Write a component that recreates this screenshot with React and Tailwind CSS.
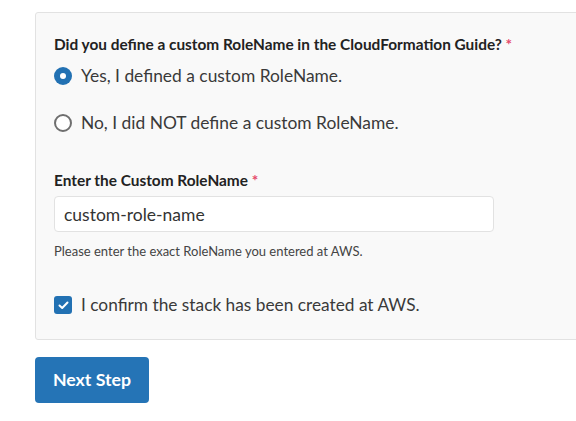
import React, { useState } from 'react';

const Radio = ({ checked, label, onClick }) => (
    <label onClick={onClick} className="flex items-center h-[28px] cursor-pointer">
        <span
            className={
                checked
                    ? 'w-[18px] h-[18px] rounded-full bg-[#2271b3] flex items-center justify-center'
                    : 'w-[18px] h-[18px] rounded-full border-2 border-[#6f6f6f] bg-white'
            }
        >
            {checked && <span className="w-[6px] h-[6px] rounded-full bg-white" />}
        </span>
        <span className="ml-[9px] text-[17.4px] leading-[28px] text-[#3a3a3a]">{label}</span>
    </label>
);

export default function App() {
    const [custom, setCustom] = useState(true);
    const [confirmed, setConfirmed] = useState(true);

    return (
        <div className="w-[576px] h-[421px] bg-white overflow-hidden pt-[12px] pl-[35px]" style={{ fontFamily: 'Lato, "Open Sans", sans-serif' }}>
            <div className="w-[580px] bg-[#f9f9f9] border border-[#e2e2e2] rounded-[3px] pl-[18px] pt-[21px] pb-[20px]">
                <div className="text-[15.4px] font-bold text-[#222] leading-[20px]">
                    Did you define a custom RoleName in the CloudFormation Guide? <span className="text-[#e5486a]">*</span>
                </div>
                <div className="mt-[8px]">
                    <Radio checked={custom} label="Yes, I defined a custom RoleName." onClick={() => setCustom(true)} />
                </div>
                <div className="mt-[19px]">
                    <Radio checked={!custom} label="No, I did NOT define a custom RoleName." onClick={() => setCustom(false)} />
                </div>

                <div className="mt-[33px] text-[15.4px] font-bold text-[#222] leading-[20px]">
                    Enter the Custom RoleName <span className="text-[#e5486a]">*</span>
                </div>
                <input
                    defaultValue="custom-role-name"
                    className="mt-[6px] block w-[440px] h-[36px] bg-white border border-[#e2e2e2] rounded-[4px] px-[9px] text-[17.5px] text-[#333] outline-none"
                    style={{ fontFamily: 'Lato, "Open Sans", sans-serif' }}
                />
                <div className="mt-[11px] text-[13px] text-[#444] leading-[16px]">
                    Please enter the exact RoleName you entered at AWS.
                </div>

                <label onClick={() => setConfirmed(!confirmed)} className="mt-[32px] flex items-center h-[28px] cursor-pointer">
                    <span
                        className={
                            confirmed
                                ? 'w-[18px] h-[18px] rounded-[3px] bg-[#2271b3] flex items-center justify-center'
                                : 'w-[18px] h-[18px] rounded-[3px] border-2 border-[#6f6f6f] bg-white'
                        }
                    >
                        {confirmed && (
                            <svg width="11" height="9" viewBox="0 0 11 9" fill="none">
                                <path d="M1.5 4.5 L4.2 7 L9.5 1.5" stroke="white" strokeWidth="2" strokeLinecap="round" strokeLinejoin="round" />
                            </svg>
                        )}
                    </span>
                    <span className="ml-[9px] text-[17.3px] leading-[28px] text-[#3a3a3a]">I confirm the stack has been created at AWS.</span>
                </label>
            </div>

            <button className="mt-[17px] w-[114px] h-[46px] bg-[#2574b6] text-white text-[17.7px] font-bold rounded-[4px]">
                Next Step
            </button>
        </div>
    );
}
